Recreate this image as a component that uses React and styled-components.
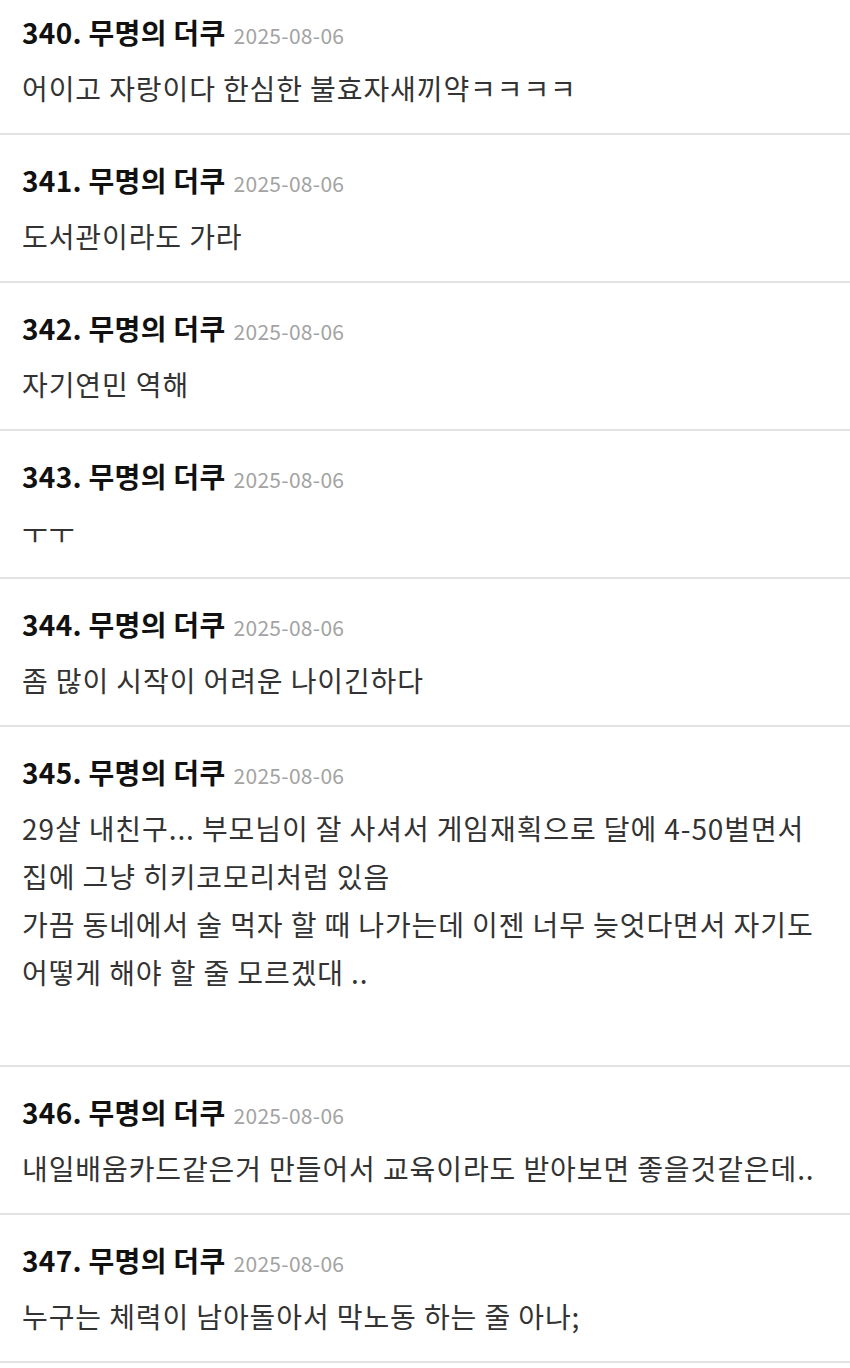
import styled, { createGlobalStyle } from 'styled-components';

const GlobalStyle = createGlobalStyle`
  html, body {
    margin: 0;
    padding: 0;
    background: #ffffff;
  }
  body {
    font-family: 'Noto Sans CJK KR', 'Noto Sans', sans-serif;
  }
`;

const comments = [
  { no: 340, text: ['어이고 자랑이다 한심한 불효자새끼약ㅋㅋㅋㅋ'] },
  { no: 341, text: ['도서관이라도 가라'] },
  { no: 342, text: ['자기연민 역해'] },
  { no: 343, text: ['ㅜㅜ'] },
  { no: 344, text: ['좀 많이 시작이 어려운 나이긴하다'] },
  {
    no: 345,
    text: [
      '29살 내친구... 부모님이 잘 사셔서 게임재획으로 달에 4-50벌면서',
      '집에 그냥 히키코모리처럼 있음',
      '가끔 동네에서 술 먹자 할 때 나가는데 이젠 너무 늦엇다면서 자기도',
      '어떻게 해야 할 줄 모르겠대 ..',
      '',
    ],
  },
  { no: 346, text: ['내일배움카드같은거 만들어서 교육이라도 받아보면 좋을것같은데..'] },
  { no: 347, text: ['누구는 체력이 남아돌아서 막노동 하는 줄 아나;'] },
];

const App = () => {
  return (
    <>
      <GlobalStyle />
      <List>
        {comments.map((c) => (
          <Item key={c.no}>
            <Header>
              <Author>{c.no}. 무명의 더쿠</Author>
              <Date>2025-08-06</Date>
            </Header>
            <Body>
              {c.text.map((line, i) => (
                <Line key={i}>{line || '\u00a0'}</Line>
              ))}
            </Body>
          </Item>
        ))}
      </List>
    </>
  );
};

export default App;

const List = styled.div`
  margin-top: -13px;
  display: flex;
  flex-direction: column;
`;

const Item = styled.div`
  padding: 27px 22px 21px 22px;
  border-bottom: 2px solid #e3e3e3;
`;

const Header = styled.div`
  display: flex;
  align-items: baseline;
  gap: 8px;
  height: 36px;
  line-height: 36px;
`;

const Author = styled.span`
  font-size: 28px;
  font-weight: 700;
  color: #111111;
  letter-spacing: 0.3px;
`;

const Date = styled.span`
  font-size: 21px;
  color: #a3a3a3;
  letter-spacing: 0.3px;
`;

const Body = styled.div`
  margin-top: 14px;
`;

const Line = styled.div`
  font-size: 28px;
  line-height: 48px;
  color: #333333;
  letter-spacing: 0.9px;
  white-space: nowrap;
`;
